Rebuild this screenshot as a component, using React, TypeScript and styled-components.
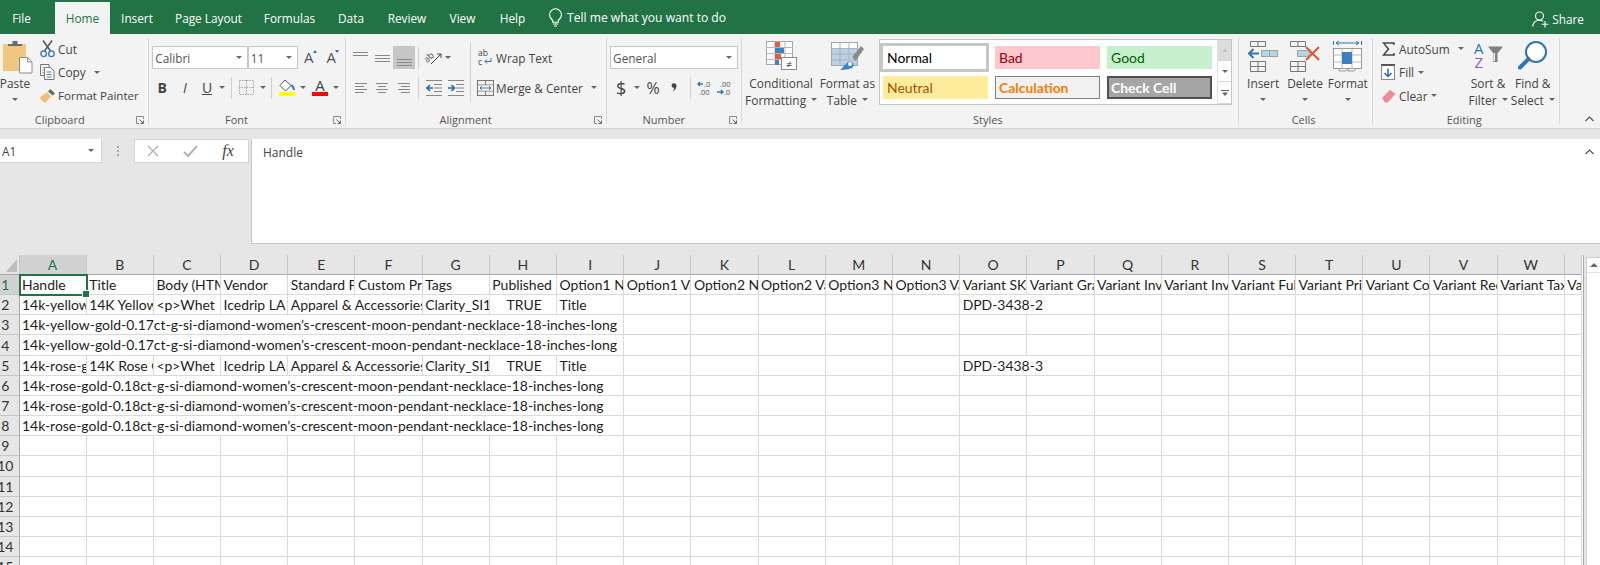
import React from "react";
import styled, { createGlobalStyle } from "styled-components";

const Global = createGlobalStyle`
  html, body { margin: 0; padding: 0; background: #e6e6e6; }
  * { box-sizing: border-box; }
`;
const UI = `"Open Sans", "Noto Sans", "Liberation Sans", sans-serif`;
const SHEET = `Lato, "Liberation Sans", sans-serif`;

const Page = styled.div`
  width: 1600px; height: 565px; overflow: hidden; display: flex; flex-direction: column;
  background: #e6e6e6; font-family: ${UI}; color: #444;
`;
const TabBar = styled.div`
  height: 34px; flex: none; background: #217346; display: flex; align-items: flex-end; color: #fff;
`;
const Tab = styled.div<{ $w: number; $active?: boolean }>`
  width: ${(p) => p.$w}px; height: ${(p) => (p.$active ? 32 : 34)}px; display: flex; align-items: center; justify-content: center;
  padding-top: ${(p) => (p.$active ? 0 : 2)}px; font-size: 11.8px; white-space: nowrap;
  background: ${(p) => (p.$active ? "#f3f3f3" : "transparent")}; color: ${(p) => (p.$active ? "#217346" : "#fff")};
`;
const TellMe = styled.div`
  height: 34px; display: flex; align-items: center; gap: 4px; margin-left: 10px; padding-top: 1px; font-size: 12.1px; white-space: nowrap;
`;
const Share = styled.div`
  height: 34px; margin-left: auto; margin-right: 16px; display: flex; align-items: center; gap: 3px; font-size: 11.8px; padding-top: 4px;
`;
const Ribbon = styled.div`
  height: 95px; flex: none; background: #f3f3f3; border-bottom: 1px solid #d2d2d2; display: flex; position: relative; align-items: flex-start;
`;
const Group = styled.div<{ $w: number }>`
  width: ${(p) => p.$w}px; height: 86px; margin-top: 4px; flex: none; display: flex; flex-direction: column; border-right: 1px solid #d8d8d8;
`;
const Body = styled.div<{ $pl?: number }>`
  height: 78px; flex: none; display: flex; padding-left: ${(p) => p.$pl ?? 0}px;
`;
const Footer = styled.div`
  height: 8px; line-height: 8px; display: grid; grid-template-columns: 1fr auto 1fr; font-size: 11px; color: #555; white-space: nowrap; padding-right: 4px;
`;
const FooterLabel = styled.span<{ $shift?: number }>` grid-column: 2; padding-right: ${(p) => (p.$shift ?? 0) * 2}px; `;
const Launcher = styled.svg` grid-column: 3; justify-self: end; `;
const Collapse = styled.svg` position: absolute; right: 6px; bottom: 6px; `;
const Tall = styled.div<{ $w: number }>`
  width: ${(p) => p.$w}px; flex: none; display: flex; flex-direction: column; align-items: center; font-size: 11.9px; color: #444;
`;
const TallIcon = styled.div<{ $ml?: number }>` height: 37px; padding-top: 3px; flex: none; display: flex; justify-content: center; margin-left: ${(p) => p.$ml ?? 0}px; `;
const TallLine = styled.div` height: 16.5px; line-height: 16.5px; display: flex; align-items: center; gap: 5px; white-space: nowrap; `;
const Caret = styled.i<{ $ml?: number }>`
  display: inline-block; flex: none; width: 0; height: 0; border-left: 3px solid transparent; border-right: 3px solid transparent;
  border-top: 3px solid #666; margin-left: ${(p) => p.$ml ?? 0}px;
`;
const SmallCol = styled.div<{ $ml?: number; $w?: number }>`
  display: flex; flex-direction: column; margin-top: -1px; margin-left: ${(p) => p.$ml ?? 0}px; ${(p) => (p.$w ? `width:${p.$w}px;flex:none;` : "")}
`;
const SmallRow = styled.div`
  height: 23.6px; display: flex; align-items: center; font-size: 11.8px; color: #444; white-space: nowrap;
`;
const PainterLabel = styled.span` font-size: 11.6px; `;
const Slot = styled.div<{ $w: number; $active?: boolean }>`
  width: ${(p) => p.$w}px; height: 23px; flex: none; display: flex; align-items: center; justify-content: center;
  background: ${(p) => (p.$active ? "#c6c6c6" : "transparent")};
`;
const Rows = styled.div`
  display: flex; flex-direction: column; gap: 7px; padding-top: 8px;
`;
const ToolRow = styled.div` display: flex; height: 23px; align-items: center; font-size: 11.8px; white-space: nowrap; `;
const Sep = styled.i`
  display: block; width: 1px; height: 22px; background: #d0d0d0;
`;
const TallSep = styled.div<{ $w: number }>`
  width: ${(p) => p.$w}px; flex: none; display: flex; justify-content: center; padding-top: 5px;
  &::before { content: ""; width: 1px; height: 59px; background: #d0d0d0; }
`;
const SelectBox = styled.div<{ $w: number }>`
  width: ${(p) => p.$w}px; height: 23px; flex: none; background: #fff; border: 1px solid #c6c6c6; display: flex; align-items: center;
  justify-content: space-between; padding: 0 5px 0 2px; font-size: 11.8px; color: #555;
`;
const Glyph = styled.span<{ $b?: boolean; $i?: boolean; $u?: boolean; $s?: number; $serif?: boolean }>`
  font-size: ${(p) => p.$s ?? 12}px; font-weight: ${(p) => (p.$b ? 700 : 400)}; font-style: ${(p) => (p.$i ? "italic" : "normal")};
  text-decoration: ${(p) => (p.$u ? "underline" : "none")}; color: #444; line-height: 1;
  font-family: ${(p) => (p.$serif ? `"Liberation Serif", serif` : "inherit")};
`;
const SizeA = styled.span<{ $dir: "up" | "down" }>`
  display: inline-flex; font-size: 15px; line-height: 1; color: #555; position: relative; padding-right: 3px;
  &::after {
    content: ""; position: absolute; right: 0; top: 0; width: 0; height: 0; border-left: 2.5px solid transparent; border-right: 2.5px solid transparent;
    ${(p) => (p.$dir === "up" ? "border-bottom: 3px solid #2f75b5;" : "border-top: 3px solid #2f75b5;")}
  }
`;
const ColorA = styled.div<{ $c: string }>`
  width: 16px; display: flex; flex-direction: column; align-items: center; font-size: 15px; line-height: 13px; color: #444;
  &::after { content: ""; width: 16px; height: 4px; background: ${(p) => p.$c}; margin-top: 0; }
`;
const Gallery = styled.div`
  width: 352.4px; height: 66px; margin-top: 1px; flex: none; display: flex; background: #fff; border: 1px solid #c6c6c6;
`;
const StyleGrid = styled.div`
  width: 337px; flex: none; padding: 5.7px 0 0 2.7px; display: grid; grid-template-columns: repeat(3, 105px); grid-auto-rows: 23px; gap: 7px;
`;
const StyleCell = styled.div<{ $bg: string; $fg: string; $b?: boolean; $border?: string; $pl?: number }>`
  background: ${(p) => p.$bg}; color: ${(p) => p.$fg}; font-family: ${SHEET}; font-size: 13.9px; font-weight: ${(p) => (p.$b ? 700 : 400)};
  display: flex; align-items: center; padding-left: ${(p) => p.$pl ?? 4}px; position: relative; ${(p) => (p.$border ? `border: ${p.$border};` : "")}
`;
const NormalCell = styled(StyleCell)`
  outline: 3px solid #c6c6c6; outline-offset: 0; margin-right: 2px;
`;
const GalleryScroll = styled.div`
  flex: 1; display: grid; grid-template-rows: 21px 21px 1fr; border-left: 1px solid #e2e2e2;
`;
const ScrollBtn = styled.div<{ $on?: boolean }>`
  display: flex; align-items: center; justify-content: center; background: ${(p) => (p.$on ? "#dcdcdc" : "#fff")}; border-bottom: 1px solid #d8d8d8; position: relative;
`;
const GalleryUp = styled.i` width: 0; height: 0; display: block; border-left: 3px solid transparent; border-right: 3px solid transparent; border-bottom: 3px solid #c0c0c0; `;
const BandGap = styled.div` height: 10px; flex: none; background: #e6e6e6; `;
const FormulaRow = styled.div` height: 105px; flex: none; display: flex; align-items: flex-start; background: #e6e6e6; `;
const NameBox = styled.div`
  width: 102px; height: 24px; flex: none; background: #fff; display: flex; align-items: center; justify-content: space-between; padding: 0 7px 0 2px;
  font-size: 11.8px; color: #444; border-right: 1px solid #d4d4d4; border-bottom: 1px solid #d4d4d4;
`;
const Dots = styled.div`
  width: 31.6px; height: 24px; flex: none; display: flex; flex-direction: column; align-items: center; justify-content: center; gap: 2px;
  & i { width: 2px; height: 2px; background: #a8a8a8; display: block; }
`;
const FnBox = styled.div`
  width: 115px; height: 24px; flex: none; background: #fff; border: 1px solid #d4d4d4; display: grid; grid-template-columns: 37px 38px 37px; align-items: center; justify-items: center;
`;
const FormulaInput = styled.div`
  margin-left: 2.4px; flex: 1; height: 105px; background: #fff; border-left: 1px solid #c6c6c6; border-bottom: 1px solid #c6c6c6;
  display: flex; justify-content: space-between; padding: 5px 6px 0 11px; font-size: 12px; color: #444;
`;
const FormulaCaret = styled.svg` margin-top: 5px; `;
const SheetArea = styled.div` flex: 1; display: flex; padding-top: 11px; min-height: 0; background: #e6e6e6; overflow: hidden; `;
const Grid = styled.div` width: 1583.5px; flex: none; display: flex; flex-direction: column; border-right: 1px solid #a8a8a8; background: #fff; `;
const Row = styled.div<{ $h?: number }>` display: flex; flex: none; height: ${(p) => p.$h ?? 20.16}px; `;
const Corner = styled.div`
  width: 19.5px; flex: none; background: #e6e6e6; border-bottom: 1px solid #a8a8a8; border-right: 1px solid #c6c6c6; display: flex; align-items: flex-end; justify-content: flex-end; padding: 0 2px 2px 0;
`;
const Cols = styled.div`
  display: grid; grid-template-columns: repeat(23, 67.2px) 17px; flex: none; font-family: ${SHEET}; font-size: 13.95px; color: #1d1d1d;
`;
const ColHead = styled.div<{ $active?: boolean }>`
  background: ${(p) => (p.$active ? "#d2d2d2" : "#e6e6e6")}; color: ${(p) => (p.$active ? "#217346" : "#333")};
  border-right: 1px solid #c6c6c6; border-bottom: 1px solid #a8a8a8; display: flex; align-items: center; justify-content: center; font-size: 14px;
`;
const RowHead = styled.div<{ $active?: boolean }>`
  width: 19.5px; flex: none; background: ${(p) => (p.$active ? "#d2d2d2" : "#e6e6e6")}; color: ${(p) => (p.$active ? "#217346" : "#333")};
  border-right: 1px solid #a8a8a8; border-bottom: 1px solid #c6c6c6; font-family: ${SHEET}; font-size: 14px;
  display: flex; align-items: center; justify-content: center; padding-right: 8px; white-space: nowrap;
`;
const Cell = styled.div<{ $span?: number; $center?: boolean }>`
  grid-column: span ${(p) => p.$span ?? 1}; border-right: 1px solid #dadada; border-bottom: 1px solid #dadada;
  padding: 0 ${(p) => (p.$center ? 0 : 2)}px 0 2.5px; white-space: nowrap; overflow: hidden; line-height: 20.5px; position: relative;
  text-align: ${(p) => (p.$center ? "center" : "left")};
`;
const Selection = styled.div`
  position: absolute; left: 18.5px; top: -1px; width: 69px; height: 22px; border: 2px solid #217346; pointer-events: none;
  &::after { content: ""; position: absolute; right: -4px; bottom: -4px; width: 6px; height: 6px; background: #217346; border: 1px solid #fff; }
`;
const SheetRowWrap = styled.div` position: relative; `;
const VScroll = styled.div`
  margin: 2px 0 0 2.5px; flex: 1; background: #fff; border-left: 1px solid #d0d0d0; border-top: 1px solid #d0d0d0;
`;
const VUp = styled.div` height: 15px; display: flex; align-items: center; justify-content: center; border-bottom: 1px solid #e2e2e2; `;
const UpArrow = styled.i` width: 0; height: 0; border-left: 4px solid transparent; border-right: 4px solid transparent; border-bottom: 4px solid #666; display: block; `;
const IconSvg = styled.svg` overflow: visible; `;
const FillWrap = styled.div` display: flex; flex-direction: column; align-items: center; `;
const FillBar = styled.i` display: block; width: 16px; height: 4px; background: #ffff00; `;

const launcher = (
  <Launcher width="8" height="8" viewBox="0 0 8 8" fill="none" stroke="#8a8a8a">
    <path d="M7.5 3V.5H.5v7H3" /><path d="M3.5 3.5 7 7M7.5 4.5v3h-3" stroke="#666" />
  </Launcher>
);

const Lbl = ({ t, s }: { t: string; s: number }) => <Footer><FooterLabel $shift={s}>{t}</FooterLabel>{launcher}</Footer>;
const LblPlain = ({ t }: { t: string }) => <Footer><FooterLabel>{t}</FooterLabel></Footer>;

const Bulb = () => (
  <svg width="15" height="19" viewBox="0 0 15 19" fill="none" stroke="#fff" strokeWidth="1.1">
    <path d="M4.7 12.5C3 11 1.5 9.6 1.5 6.8a6 6 0 0 1 12 0c0 2.8-1.5 4.2-3.2 5.7v1.7H4.7z" /><path d="M5 16h5M6 18h3" />
  </svg>
);
const ShareIco = () => (
  <svg width="17" height="17" viewBox="0 0 17 17" fill="none" stroke="#fff" strokeWidth="1.1">
    <circle cx="7.5" cy="5" r="4" /><path d="M.7 15.5C1.2 11.5 4 9.3 7.5 9.3c1.4 0 2.6.4 3.6 1" /><path d="M13 10v6.5M9.8 13.2h6.5" />
  </svg>
);
const PasteIco = () => (
  <svg width="30" height="33" viewBox="0 0 30 33">
    <rect x="0" y="3" width="23" height="27" rx="1" fill="#f0c77f" />
    <path d="M5 5V3h4.5V0h5v3H19v2z" fill="#6b6b6b" />
    <path d="M16.5 16.5h8l4.5 4.5v11H16.5z" fill="#fff" stroke="#8f8f8f" />
    <path d="M24.5 16.5V21H29" fill="none" stroke="#8f8f8f" />
  </svg>
);
const Scissors = () => (
  <svg width="15" height="18" viewBox="0 0 15 18" fill="none">
    <path d="M3 .5 10.5 11M12 .5 4.5 11" stroke="#555" strokeWidth="1.5" />
    <circle cx="3.6" cy="13.8" r="2.8" stroke="#3f82c4" strokeWidth="1.4" /><circle cx="11.4" cy="13.8" r="2.8" stroke="#3f82c4" strokeWidth="1.4" />
  </svg>
);
const CopyIco = () => (
  <svg width="15" height="16" viewBox="0 0 15 16" fill="none" stroke="#777">
    <path d="M9 3V.5H.5v11H4" /><path d="M4.5 3.5h6l3.5 3.5v8.5H4.5z" fill="#fff" />
    <path d="M6.5 8h5M6.5 10.5h5M6.5 13h5" stroke="#4a7fb5" /><path d="M2.5 3.5H4M2.5 6H4M2.5 8.5H4" stroke="#999" />
  </svg>
);
const Painter = () => (
  <svg width="15" height="14" viewBox="0 0 15 14">
    <path d="M0 8.5 7 3l4 4.5L5 14c-1-1-1.5-1-2-2-.5.2-1.5 0-3-3.5z" fill="#eebf78" />
    <path d="M8 2.5 10.5 0 15 4.5l-2.5 2z" fill="#6a6a6a" />
  </svg>
);
const BorderIco = () => (
  <svg width="15" height="15" viewBox="0 0 15 15" fill="none" stroke="#a8a8a8" strokeDasharray="1.5 1">
    <rect x=".5" y=".5" width="14" height="14" /><path d="M7.5 0v15M0 7.5h15" />
  </svg>
);
const FillIco = () => (
  <FillWrap>
    <svg width="16" height="13" viewBox="0 0 16 13" fill="none">
      <path d="M6 1 1 6.5 6.5 12 12 6.5z" fill="#fff" stroke="#555" /><path d="M12.5 6c1.5 1.500 2.500 3 2.500 5" stroke="#2f75b5" strokeWidth="2" />
    </svg>
    <FillBar />
  </FillWrap>
);
const Lines = ({ w, ys, xs }: { w: number; ys: number[]; xs?: [number, number][] }) => (
  <svg width={w} height="16" viewBox={`0 0 ${w} 16`} fill="none" stroke="#888">
    {ys.map((y, i) => <path key={y} d={`M${xs ? xs[i][0] : 0} ${y}.5H${xs ? xs[i][1] : w}`} />)}
  </svg>
);
const Orient = () => (
  <IconSvg width="17" height="17" viewBox="0 0 17 17" fill="none">
    <text x="0" y="11" fontSize="9" fill="#555" fontFamily={UI} transform="rotate(-45 5 10)">ab</text>
    <path d="M6 15 16 5M12 5h4v4" stroke="#444" />
  </IconSvg>
);
const Indent = ({ right }: { right?: boolean }) => (
  <svg width="16" height="16" viewBox="0 0 16 16" fill="none">
    <path d="M0 .5h16M0 15.5h16M8 4.5h8M8 8h8M8 11.5h8" stroke="#888" />
    {right ? <path d="M0 8h6M3.5 5 6.5 8l-3 3" stroke="#1f6eb5" strokeWidth="1.6" /> : <path d="M7 8H1M4 5 1 8l3 3" stroke="#1f6eb5" strokeWidth="1.6" />}
  </svg>
);
const WrapIco = () => (
  <IconSvg width="14" height="17" viewBox="0 0 14 17">
    <text x="0" y="7" fontSize="8.5" fill="#444" fontFamily={UI}>ab</text>
    <text x="0" y="15.5" fontSize="8.5" fill="#444" fontFamily={UI}>c</text>
    <path d="M13 9v3.500H7M9 10.500l-2 2 2 2" fill="none" stroke="#2f75b5" />
  </IconSvg>
);
const MergeIco = () => (
  <svg width="17" height="16" viewBox="0 0 17 16" fill="none" stroke="#777">
    <rect x=".5" y=".5" width="16" height="15" /><path d="M.5 5h16M.5 11h16M8.500 0v5M8.500 11v5" />
    <rect x="1" y="5.500" width="15" height="5" fill="#fff" stroke="none" /><path d="M3 8h11M5 6 3 8l2 2M12 6l2 2-2 2" stroke="#2f75b5" />
  </svg>
);
const CommaIco = () => (
  <svg width="6" height="9" viewBox="0 0 6 9"><circle cx="3" cy="2.600" r="2.400" fill="#444" /><path d="M5.400 2.600C5.400 5.500 4 7.500 1.500 8.500 2.800 7 3.200 6 3.200 4.500z" fill="#444" /></svg>
);
const Dec = ({ inc }: { inc?: boolean }) => (
  <IconSvg width="15" height="16" viewBox="0 0 15 16">
    {inc ? (
      <>
        <path d="M6 4H1M3 2 1 4l2 2" fill="none" stroke="#2f75b5" strokeWidth="1.4" />
        <text x="7" y="7" fontSize="7.5" fill="#555" fontFamily={UI}>.0</text>
        <text x="2" y="15" fontSize="7.5" fill="#555" fontFamily={UI}>.00</text>
      </>
    ) : (
      <>
        <text x="4" y="7" fontSize="7.5" fill="#555" fontFamily={UI}>.00</text>
        <path d="M1 12h6M5 10l2 2-2 2" fill="none" stroke="#2f75b5" strokeWidth="1.4" />
        <text x="8" y="15" fontSize="7.5" fill="#555" fontFamily={UI}>.0</text>
      </>
    )}
  </IconSvg>
);
const CondIco = () => (
  <IconSvg width="31" height="29" viewBox="0 0 31 29" fill="none">
    <rect x=".5" y=".5" width="26" height="23" fill="#fff" stroke="#a6a6a6" />
    <path d="M.5 6.500h26M.5 12.500h26M.5 18.500h26M9 0v24M19 0v24" stroke="#b8b8b8" />
    <rect x="9" y="1" width="5" height="5" fill="#d9603b" /><rect x="9" y="7" width="9" height="5" fill="#3f82c4" />
    <rect x="9" y="13" width="6" height="5" fill="#d9603b" /><rect x="9" y="19" width="4" height="5" fill="#3f82c4" />
    <rect x="15.500" y="16.500" width="15" height="12" fill="#fff" stroke="#8c8c8c" />
    <text x="23" y="26.500" textAnchor="middle" fontSize="11" fill="#444" fontFamily={UI}>≠</text>
  </IconSvg>
);
const TableIco = () => (
  <svg width="33" height="30" viewBox="0 0 33 30" fill="none">
    <rect x=".5" y="1.500" width="26" height="23" fill="#fff" stroke="#a6a6a6" />
    <rect x="1" y="7" width="25" height="17" fill="#bcd0e6" />
    <path d="M.5 7.500h26M.5 13h26M.5 19h26M9 1v24M18 1v24" stroke="#a9b4c0" />
    <path d="M21 16 30 5l3 3-8.500 12z" fill="#8a8a8a" />
    <path d="M9 29c2-1 4-5 8-8 3-1 7 1 5 5-1 2-8 3-13 3z" fill="#3f82c4" /><circle cx="19" cy="23" r="2" fill="#fff" />
  </svg>
);
const InsertIco = () => (
  <svg width="30" height="31" viewBox="0 0 30 31" fill="none">
    <path d="M2.500.5h15v5h-15zM10 .5v5M2.500 20.500h15v10h-15zM10 20.500v10M2.500 25.500h15" stroke="#777" />
    <rect x="13.500" y="9.500" width="16" height="6" fill="#bcd0e6" stroke="#8aa" /><path d="M21.500 9.500v6" stroke="#8aa" />
    <path d="M11 12.500H1M5.500 8 1 12.500 5.500 17" stroke="#2f75b5" strokeWidth="2" />
  </svg>
);
const DeleteIco = () => (
  <svg width="30" height="31" viewBox="0 0 30 31" fill="none">
    <path d="M.5.500h15v5H.5zM8 .5v5M.5 20.500h15v10H.5zM8 20.500v10M.5 25.500h15" stroke="#777" />
    <path d="M7.500 9.500h10l3 3-3 3h-10z" fill="#bcd0e6" stroke="#8aa" />
    <path d="M16 6 29 19M29 6 16 19" stroke="#e3572e" strokeWidth="2" />
  </svg>
);
const FormatIco = () => (
  <svg width="29" height="31" viewBox="0 0 29 31" fill="none">
    <path d="M.5 0v4M28.500 0v4M3 2h23M6 0 3 2l3 2M23 0l3 2-3 2" stroke="#2f75b5" />
    <rect x=".5" y="7.500" width="28" height="20" fill="#fff" stroke="#999" />
    <path d="M.5 14h28M.5 21h28M9 7.500v20M19 7.500v20" stroke="#b8b8b8" />
    <rect x="9" y="11" width="10" height="12" fill="#3f7fbe" />
    <path d="M6 28v2h7l2-2M15 28v2h6l2-2" stroke="#999" />
  </svg>
);
const Sigma = () => (
  <svg width="13" height="14" viewBox="0 0 13 14" fill="none"><path d="M12 3V1H1.500l5 6-5 6H12v-2" stroke="#444" strokeWidth="1.500" /></svg>
);
const FillDown = () => (
  <svg width="14" height="16" viewBox="0 0 14 16" fill="none">
    <rect x=".5" y="1.500" width="13" height="14" fill="#fff" stroke="#8a8a8a" /><path d="M0 1h14" stroke="#555" strokeWidth="2" />
    <path d="M7 4.500v8M3.500 9 7 12.500 10.500 9" stroke="#1f6eb5" strokeWidth="1.500" />
  </svg>
);
const Eraser = () => (
  <svg width="15" height="14" viewBox="0 0 15 14"><path d="M1 9 9 1l5.500 4-8 8.500H4z" fill="#ec8a98" /></svg>
);
const SortIco = () => (
  <IconSvg width="29" height="28" viewBox="0 0 29 28">
    <text x="0" y="12.500" fontSize="15" fill="#2f75b5" fontFamily={UI}>A</text>
    <text x="0.500" y="27" fontSize="15" fill="#8e5cc0" fontFamily={UI}>Z</text>
    <path d="M14 5.500h15l-5.500 7V21h-4v-8.500z" fill="#808080" />
    <path d="M20.500 12v8" stroke="#fff" />
  </IconSvg>
);
const FindIco = () => (
  <svg width="30" height="29" viewBox="0 0 30 29" fill="none">
    <circle cx="18" cy="11" r="10" fill="#fff" stroke="#2f75b5" strokeWidth="2" />
    <path d="M10.500 18 2 26.500" stroke="#2f75b5" strokeWidth="4" strokeLinecap="round" />
  </svg>
);
const XIco = () => <svg width="14" height="14" viewBox="0 0 14 14" fill="none"><path d="M2 2 12 12M12 2 2 12" stroke="#b4b4b4" strokeWidth="1.400" /></svg>;
const CheckIco = () => <svg width="15" height="13" viewBox="0 0 15 13" fill="none"><path d="M1 7l4 4 9-10" stroke="#b4b4b4" strokeWidth="2" /></svg>;

const LONG_Y = "14k-yellow-gold-0.17ct-g-si-diamond-women’s-crescent-moon-pendant-necklace-18-inches-long";
const LONG_R = "14k-rose-gold-0.18ct-g-si-diamond-women’s-crescent-moon-pendant-necklace-18-inches-long";
const LETTERS = "ABCDEFGHIJKLMNOPQRSTUVW".split("");
const HEAD = ["Handle", "Title", "Body (HTML", "Vendor", "Standard Pr", "Custom Pro", "Tags", "Published", "Option1 Na", "Option1 Val", "Option2 Na", "Option2 Val", "Option3 Na", "Option3 Val", "Variant SKU", "Variant Gra", "Variant Inve", "Variant Inve", "Variant Fulf", "Variant Pric", "Variant Com", "Variant Req", "Variant Tax", "Var"];

const Blanks = ({ n }: { n: number }) => <>{Array.from({ length: n }, (_, i) => <Cell key={i} />)}</>;
const ProductRow = ({ a, b, sku }: { a: string; b: string; sku: string }) => (
  <>
    <Cell>{a}</Cell><Cell>{b}</Cell><Cell>{"<p>Whet"}</Cell><Cell>Icedrip LA</Cell><Cell $span={2}>Apparel &amp; Accessories</Cell>
    <Cell>Clarity_SI1</Cell><Cell $center>TRUE</Cell><Cell>Title</Cell><Blanks n={5} /><Cell $span={2}>{sku}</Cell><Blanks n={8} />
  </>
);
const LongRow = ({ t }: { t: string }) => <><Cell $span={9}>{t}</Cell><Blanks n={15} /></>;
const rowContent = (n: number) => {
  if (n === 1) return HEAD.map((h, i) => <Cell key={i}>{h}</Cell>);
  if (n === 2) return <ProductRow a="14k-yellow-" b="14K Yellow G" sku="DPD-3438-2" />;
  if (n === 3 || n === 4) return <LongRow t={LONG_Y} />;
  if (n === 5) return <ProductRow a="14k-rose-go" b="14K Rose Go" sku="DPD-3438-3" />;
  if (n >= 6 && n <= 8) return <LongRow t={LONG_R} />;
  return <Blanks n={24} />;
};

export default function App() {
  return (
    <Page>
      <Global />
      <TabBar>
        <Tab $w={43}>File</Tab>
        <Tab $w={12} />
        <Tab $w={55} $active>Home</Tab>
        <Tab $w={54}>Insert</Tab>
        <Tab $w={89}>Page Layout</Tab>
        <Tab $w={73}>Formulas</Tab>
        <Tab $w={50}>Data</Tab>
        <Tab $w={62}>Review</Tab>
        <Tab $w={49}>View</Tab>
        <Tab $w={51}>Help</Tab>
        <TellMe><Bulb />Tell me what you want to do</TellMe>
        <Share><ShareIco />Share</Share>
      </TabBar>
      <Ribbon>
        <Group $w={148.5}>
          <Body>
            <Tall $w={30}>
              <TallIcon $ml={5}><PasteIco /></TallIcon>
              <TallLine>Paste</TallLine>
              <TallLine><Caret /></TallLine>
            </Tall>
            <SmallCol $ml={7}>
              <SmallRow><Slot $w={21}><Scissors /></Slot>Cut</SmallRow>
              <SmallRow><Slot $w={21}><CopyIco /></Slot>Copy<Caret $ml={8} /></SmallRow>
              <SmallRow><Slot $w={21}><Painter /></Slot><PainterLabel>Format Painter</PainterLabel></SmallRow>
            </SmallCol>
          </Body>
          <Lbl t="Clipboard" s={12} />
        </Group>
        <Group $w={197}>
          <Body $pl={3.800}>
            <Rows>
              <ToolRow>
                <SelectBox $w={95.500}>Calibri<Caret /></SelectBox>
                <SelectBox $w={50}>11<Caret /></SelectBox>
                <Slot $w={25}><SizeA $dir="up">A</SizeA></Slot>
                <Slot $w={20}><SizeA $dir="down">A</SizeA></Slot>
              </ToolRow>
              <ToolRow>
                <Slot $w={19.700}><Glyph $b $s={14}>B</Glyph></Slot>
                <Slot $w={26}><Glyph $i $s={14}>I</Glyph></Slot>
                <Slot $w={18}><Glyph $u $s={14}>U</Glyph></Slot>
                <Slot $w={13}><Caret /></Slot>
                <Slot $w={6}><Sep /></Slot>
                <Slot $w={23}><BorderIco /></Slot>
                <Slot $w={10}><Caret /></Slot>
                <Slot $w={8}><Sep /></Slot>
                <Slot $w={22}><FillIco /></Slot>
                <Slot $w={10}><Caret /></Slot>
                <Slot $w={24}><ColorA $c="#ff0000">A</ColorA></Slot>
                <Slot $w={8}><Caret /></Slot>
              </ToolRow>
            </Rows>
          </Body>
          <Lbl t="Font" s={8} />
        </Group>
        <Group $w={261.300}>
          <Body $pl={3.600}>
            <Rows>
              <ToolRow>
                <Slot $w={23}><Lines w={15} ys={[2, 5]} /></Slot>
                <Slot $w={21}><Lines w={15} ys={[5, 8, 11]} /></Slot>
                <Slot $w={22} $active><Lines w={15} ys={[9, 12, 15]} /></Slot>
                <Slot $w={7}><Sep /></Slot>
                <Slot $w={23}><Orient /></Slot>
                <Slot $w={6}><Caret /></Slot>
              </ToolRow>
              <ToolRow>
                <Slot $w={23}><Lines w={12} ys={[3, 6, 9, 12]} xs={[[0, 12], [0, 9], [0, 12], [0, 9]]} /></Slot>
                <Slot $w={20}><Lines w={12} ys={[3, 6, 9, 12]} xs={[[0, 12], [2, 10], [0, 12], [2, 10]]} /></Slot>
                <Slot $w={23}><Lines w={12} ys={[3, 6, 9, 12]} xs={[[0, 12], [3, 12], [0, 12], [3, 12]]} /></Slot>
                <Slot $w={7}><Sep /></Slot>
                <Slot $w={23}><Indent /></Slot>
                <Slot $w={21}><Indent right /></Slot>
              </ToolRow>
            </Rows>
            <TallSep $w={8} />
            <Rows>
              <ToolRow><Slot $w={22}><WrapIco /></Slot>Wrap Text</ToolRow>
              <ToolRow><Slot $w={22}><MergeIco /></Slot>Merge &amp; Center<Caret $ml={8} /></ToolRow>
            </Rows>
          </Body>
          <Lbl t="Alignment" s={8} />
        </Group>
        <Group $w={135}>
          <Body $pl={3.300}>
            <Rows>
              <ToolRow><SelectBox $w={128}>General<Caret /></SelectBox></ToolRow>
              <ToolRow>
                <Slot $w={22}><Glyph $s={18}>$</Glyph></Slot>
                <Slot $w={9.400}><Caret /></Slot>
                <Slot $w={23.200}><Glyph $s={16}>%</Glyph></Slot>
                <Slot $w={19}><CommaIco /></Slot>
                <Slot $w={14}><Sep /></Slot>
                <Slot $w={14.600}><Dec inc /></Slot>
                <Slot $w={23}><Dec /></Slot>
              </ToolRow>
            </Rows>
          </Body>
          <Lbl t="Number" s={8} />
        </Group>
        <Group $w={497}>
          <Body $pl={5}>
            <Tall $w={68.600}>
              <TallIcon><CondIco /></TallIcon>
              <TallLine>Conditional</TallLine>
              <TallLine>Formatting<Caret /></TallLine>
            </Tall>
            <Tall $w={64}>
              <TallIcon><TableIco /></TallIcon>
              <TallLine>Format as</TallLine>
              <TallLine>Table<Caret /></TallLine>
            </Tall>
            <Gallery>
              <StyleGrid>
                <NormalCell $bg="#fff" $fg="#000">Normal</NormalCell>
                <StyleCell $bg="#ffc7ce" $fg="#9c0006">Bad</StyleCell>
                <StyleCell $bg="#c6efce" $fg="#006100">Good</StyleCell>
                <StyleCell $bg="#ffeb9c" $fg="#9c5700">Neutral</StyleCell>
                <StyleCell $bg="#f2f2f2" $fg="#fa7d00" $b $border="1px solid #7f7f7f" $pl={3}>Calculation</StyleCell>
                <StyleCell $bg="#a5a5a5" $fg="#fff" $b $border="2px solid #505050" $pl={2}>Check Cell</StyleCell>
              </StyleGrid>
              <GalleryScroll>
                <ScrollBtn $on><GalleryUp /></ScrollBtn>
                <ScrollBtn><Caret /></ScrollBtn>
                <ScrollBtn><svg width="8" height="6" viewBox="0 0 8 6"><path d="M0 .5h8" stroke="#666" /><path d="M1 2.500h6L4 6z" fill="#666" /></svg></ScrollBtn>
              </GalleryScroll>
            </Gallery>
          </Body>
          <LblPlain t="Styles" />
        </Group>
        <Group $w={134.600}>
          <Body $pl={4}>
            <Tall $w={40.600}>
              <TallIcon><InsertIco /></TallIcon>
              <TallLine>Insert</TallLine>
              <TallLine><Caret /></TallLine>
            </Tall>
            <Tall $w={43.400}>
              <TallIcon><DeleteIco /></TallIcon>
              <TallLine>Delete</TallLine>
              <TallLine><Caret /></TallLine>
            </Tall>
            <Tall $w={42}>
              <TallIcon><FormatIco /></TallIcon>
              <TallLine>Format</TallLine>
              <TallLine><Caret /></TallLine>
            </Tall>
          </Body>
          <LblPlain t="Cells" />
        </Group>
        <Group $w={186.700}>
          <Body $pl={3.700}>
            <SmallCol $w={89}>
              <SmallRow><Slot $w={22}><Sigma /></Slot>AutoSum<Caret $ml={8} /></SmallRow>
              <SmallRow><Slot $w={22}><FillDown /></Slot>Fill<Caret $ml={4} /></SmallRow>
              <SmallRow><Slot $w={22}><Eraser /></Slot>Clear<Caret $ml={3} /></SmallRow>
            </SmallCol>
            <Tall $w={44}>
              <TallIcon><SortIco /></TallIcon>
              <TallLine>Sort &amp;</TallLine>
              <TallLine>Filter<Caret /></TallLine>
            </Tall>
            <Tall $w={45.400}>
              <TallIcon><FindIco /></TallIcon>
              <TallLine>Find &amp;</TallLine>
              <TallLine>Select<Caret /></TallLine>
            </Tall>
          </Body>
          <LblPlain t="Editing" />
        </Group>
        <Collapse width="9" height="6" viewBox="0 0 9 6" fill="none"><path d="M.5 5 4.500 1l4 4" stroke="#555" strokeWidth="1.200" /></Collapse>
      </Ribbon>
      <BandGap />
      <FormulaRow>
        <NameBox>A1<Caret /></NameBox>
        <Dots><i /><i /><i /></Dots>
        <FnBox><XIco /><CheckIco /><Glyph $i $serif $s={16}>fx</Glyph></FnBox>
        <FormulaInput>Handle<FormulaCaret width="9" height="6" viewBox="0 0 9 6" fill="none"><path d="M.5 5 4.500 1l4 4" stroke="#555" strokeWidth="1.200" /></FormulaCaret></FormulaInput>
      </FormulaRow>
      <SheetArea>
        <Grid>
          <Row $h={20}>
            <Corner><svg width="11" height="13" viewBox="0 0 11 13"><path d="M11 0v13H0z" fill="#bdbdbd" /></svg></Corner>
            <Cols>
              {LETTERS.map((l, i) => <ColHead key={l} $active={i === 0}>{l}</ColHead>)}
              <ColHead />
            </Cols>
          </Row>
          <SheetRowWrap>
            {Array.from({ length: 15 }, (_, i) => (
              <Row key={i}>
                <RowHead $active={i === 0}>{i + 1}</RowHead>
                <Cols>{rowContent(i + 1)}</Cols>
              </Row>
            ))}
            <Selection />
          </SheetRowWrap>
        </Grid>
        <VScroll><VUp><UpArrow /></VUp></VScroll>
      </SheetArea>
    </Page>
  );
}
